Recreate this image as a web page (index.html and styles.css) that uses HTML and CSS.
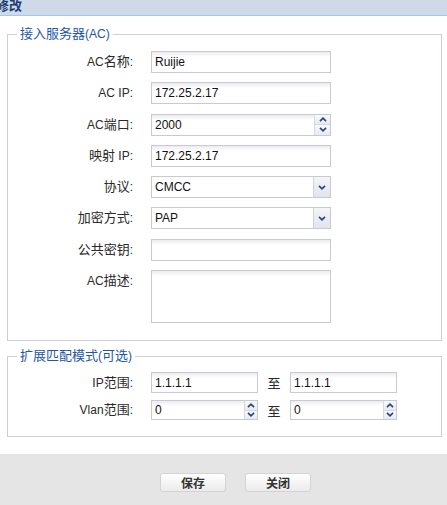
FILE: index.html
```html
<!DOCTYPE html>
<html>
<head>
<meta charset="utf-8">
<link rel="stylesheet" href="styles.css">
</head>
<body>
<div class="titlebar"><span class="title">修改</span></div>
<div class="content">
  <fieldset class="group g1">
    <legend><span class="zh">接入服务器</span>(AC)</legend>
    <div class="form f1">
      <label>AC<span class="zh">名称</span>:</label>
      <div class="box text">Ruijie</div>

      <label>AC IP:</label>
      <div class="box text">172.25.2.17</div>

      <label>AC<span class="zh">端口</span>:</label>
      <div class="box spin">
        <span class="val">2000</span>
        <span class="arrows">
          <span class="btn"><svg width="8" height="5" viewBox="0 0 8 5"><path d="M1 4.2 L4 1.2 L7 4.2" fill="none" stroke="#27477f" stroke-width="1.7"/></svg></span>
          <span class="btn"><svg width="8" height="5" viewBox="0 0 8 5"><path d="M1 0.8 L4 3.8 L7 0.8" fill="none" stroke="#27477f" stroke-width="1.7"/></svg></span>
        </span>
      </div>

      <label><span class="zh">映射</span> IP:</label>
      <div class="box text">172.25.2.17</div>

      <label><span class="zh">协议</span>:</label>
      <div class="box select">
        <span class="val">CMCC</span>
        <span class="drop"><svg width="8" height="5" viewBox="0 0 8 5"><path d="M1 0.8 L4 3.8 L7 0.8" fill="none" stroke="#27477f" stroke-width="1.7"/></svg></span>
      </div>

      <label><span class="zh">加密方式</span>:</label>
      <div class="box select">
        <span class="val">PAP</span>
        <span class="drop"><svg width="8" height="5" viewBox="0 0 8 5"><path d="M1 0.8 L4 3.8 L7 0.8" fill="none" stroke="#27477f" stroke-width="1.7"/></svg></span>
      </div>

      <label><span class="zh">公共密钥</span>:</label>
      <div class="box text"></div>

      <label class="top">AC<span class="zh">描述</span>:</label>
      <div class="box area"></div>
    </div>
  </fieldset>

  <fieldset class="group g2">
    <legend><span class="zh">扩展匹配模式</span>(<span class="zh">可选</span>)</legend>
    <div class="form f2">
      <label>IP<span class="zh">范围</span>:</label>
      <div class="box text small">1.1.1.1</div>
      <span class="to">至</span>
      <div class="box text small">1.1.1.1</div>

      <label>Vlan<span class="zh">范围</span>:</label>
      <div class="box spin small tiny">
        <span class="val">0</span>
        <span class="arrows">
          <span class="btn"><svg width="8" height="5" viewBox="0 0 8 5"><path d="M1 4.2 L4 1.2 L7 4.2" fill="none" stroke="#27477f" stroke-width="1.7"/></svg></span>
          <span class="btn"><svg width="8" height="5" viewBox="0 0 8 5"><path d="M1 0.8 L4 3.8 L7 0.8" fill="none" stroke="#27477f" stroke-width="1.7"/></svg></span>
        </span>
      </div>
      <span class="to">至</span>
      <div class="box spin small tiny">
        <span class="val">0</span>
        <span class="arrows">
          <span class="btn"><svg width="8" height="5" viewBox="0 0 8 5"><path d="M1 4.2 L4 1.2 L7 4.2" fill="none" stroke="#27477f" stroke-width="1.7"/></svg></span>
          <span class="btn"><svg width="8" height="5" viewBox="0 0 8 5"><path d="M1 0.8 L4 3.8 L7 0.8" fill="none" stroke="#27477f" stroke-width="1.7"/></svg></span>
        </span>
      </div>
    </div>
  </fieldset>
</div>
<div class="footer">
  <button class="button">保存</button>
  <button class="button">关闭</button>
</div>
</body>
</html>
```

FILE: styles.css
```css
html, body {
  margin: 0;
  padding: 0;
  background: #ffffff;
}
body {
  width: 447px;
  height: 505px;
  overflow: hidden;
  font-family: "Liberation Sans", "Noto Sans CJK SC", sans-serif;
  font-size: 12px;
  color: #2a2a2a;
}
.zh {
  font-family: "Noto Sans CJK SC", sans-serif;
  font-size: 13px;
  line-height: 14px;
}
.titlebar {
  height: 15px;
  background: #cfdae8;
  border-bottom: 1px solid #a4c5ec;
  overflow: hidden;
}
.title {
  display: block;
  margin-left: -4px;
  margin-top: -3px;
  font-family: "Noto Sans CJK SC", sans-serif;
  font-size: 13px;
  line-height: 16px;
  font-weight: bold;
  color: #1d3d72;
}
.content {
  padding: 0 5px 0 7px;
}
.group {
  margin: 0;
  border: 1px solid #cfcfdb;
  padding: 0;
  min-width: 0;
}
.group legend {
  margin-left: 9px;
  padding: 0 3px;
  height: 16px;
  font-size: 12px;
  line-height: 16px;
  color: #2456a6;
}
.g1 {
  margin-top: 10px;
  padding-top: 9px;
  padding-bottom: 17px;
}
.g2 {
  margin-top: 7px;
  padding-top: 8px;
  padding-bottom: 16px;
}
.form {
  display: grid;
  align-items: center;
}
.f1 {
  grid-template-columns: 143px 180px;
  row-gap: 9.3px;
}
.f2 {
  grid-template-columns: 143px 107px 32px 107px;
  row-gap: 7px;
}
.form label {
  text-align: right;
  padding-right: 18px;
  color: #2a2a2a;
  font-size: 12px;
  line-height: 15px;
}
.form label.top {
  align-self: start;
  padding-top: 3px;
}
.to {
  text-align: center;
  font-family: "Noto Sans CJK SC", sans-serif;
  font-size: 13px;
  line-height: 15px;
  color: #2a2a2a;
}
.box {
  box-sizing: border-box;
  height: 22px;
  border: 1px solid #c8c8d6;
  background: linear-gradient(#ececec, #ffffff 5px);
  display: flex;
  align-items: center;
  color: #111;
  font-size: 12px;
  font-family: "Liberation Sans", sans-serif;
}
.text {
  padding-left: 3px;
}
.small {
  height: 21px;
}
.tiny {
  height: 20px;
}
.area {
  height: 53px;
}
.val {
  flex: 1;
  padding-left: 3px;
}
.arrows {
  align-self: stretch;
  width: 15px;
  display: flex;
  flex-direction: column;
  border-left: 1px solid #d6d9e0;
}
.tiny .arrows {
  width: 12px;
}
.btn {
  flex: 1;
  display: flex;
  align-items: center;
  justify-content: center;
  background: linear-gradient(#f8f9fb, #e6eaf0);
}
.btn + .btn {
  border-top: 1px solid #d6d9e0;
}
.select {
  background: #ffffff;
}
.drop {
  align-self: stretch;
  width: 16px;
  display: flex;
  align-items: center;
  justify-content: center;
  border-left: 1px solid #cfd3db;
  background: linear-gradient(#f4f5f8, #e0e4ec);
}
.footer {
  margin-top: 17px;
  height: 51px;
  background: #e5e5e5;
  display: flex;
  align-items: flex-start;
  padding-left: 160px;
  padding-top: 19px;
  box-sizing: border-box;
  column-gap: 19px;
}
.button {
  width: 66px;
  height: 19px;
  padding: 0;
  border: 1px solid #d3d3d3;
  border-radius: 3px;
  background: linear-gradient(#ffffff, #ebebeb);
  font-family: "Noto Sans CJK SC", sans-serif;
  font-size: 12px;
  font-weight: bold;
  line-height: 16px;
  color: #333;
}
```
